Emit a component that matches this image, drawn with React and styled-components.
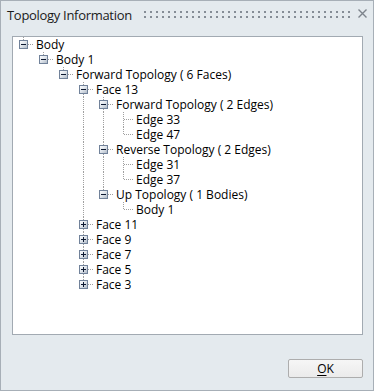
import React from 'react'
import styled, {createGlobalStyle} from 'styled-components'

const GlobalStyle = createGlobalStyle`
  html, body {
    margin: 0;
    padding: 0;
    background: #e4eaee;
  }
`

const FONT = `'Open Sans', 'Liberation Sans', Arial, sans-serif`
const LINE = '#a0a0a0'

const Window = styled.div`
  width: 374px;
  height: 391px;
  box-sizing: border-box;
  border: 1px solid #a7afb7;
  background: #e4eaee;
  display: flex;
  flex-direction: column;
  font-family: ${FONT};
  color: #000;
`

const TitleBar = styled.div`
  display: flex;
  align-items: flex-start;
  height: 35px;
  box-sizing: border-box;
  padding: 5px 6px 0 6px;
`

const Title = styled.div`
  font-size: 13px;
  letter-spacing: -0.3px;
  line-height: 18px;
  color: #1b1b1b;
  white-space: nowrap;
`

const Grip = styled.svg`
  flex: 1;
  height: 7px;
  margin: 5px 0 0 12px;
`

const CloseButton = styled.svg`
  width: 9px;
  height: 9px;
  margin: 3px 0 0 6px;
  flex: none;
`

const TreePanel = styled.div`
  margin: 0 10px 0 11px;
  height: 299px;
  box-sizing: border-box;
  border: 1px solid #a2aab2;
  background: #fff;
  overflow: hidden;
`

const Row = styled.div`
  display: flex;
  align-items: center;
  height: 15px;
  white-space: nowrap;
`

const Cell = styled.svg`
  width: 20px;
  height: 15px;
  flex: none;
  display: block;
  shape-rendering: crispEdges;
`

const Label = styled.span`
  font-size: 12px;
  line-height: 15px;
  padding-left: 3px;
`

const Footer = styled.div`
  display: flex;
  justify-content: flex-end;
  padding: 24px 10px 0 0;
`

const Button = styled.button`
  width: 75px;
  height: 19px;
  box-sizing: border-box;
  border: 1px solid #adadad;
  border-radius: 2px;
  background: linear-gradient(#f6f6f6, #ebebeb);
  font-family: ${FONT};
  font-size: 12px;
  line-height: 15px;
  padding: 0;
  color: #000;

  u {
    text-decoration: underline;
    text-underline-offset: 2px;
  }
`

const rows = [
  [0, 'Body', 'minus'],
  [1, 'Body 1', 'minus'],
  [2, 'Forward Topology ( 6 Faces)', 'minus'],
  [3, 'Face 13', 'minus'],
  [4, 'Forward Topology ( 2 Edges)', 'minus'],
  [5, 'Edge 33'],
  [5, 'Edge 47'],
  [4, 'Reverse Topology ( 2 Edges)', 'minus'],
  [5, 'Edge 31'],
  [5, 'Edge 37'],
  [4, 'Up Topology ( 1 Bodies)', 'minus'],
  [5, 'Body 1'],
  [3, 'Face 11', 'plus'],
  [3, 'Face 9', 'plus'],
  [3, 'Face 7', 'plus'],
  [3, 'Face 5', 'plus'],
  [3, 'Face 3', 'plus']
]

const hasNext = i => {
  const level = rows[i][0]
  for (let j = i + 1; j < rows.length; j++) {
    if (rows[j][0] < level) return false
    if (rows[j][0] === level) return true
  }
  return false
}

const ancestorHasNext = (i, k) => {
  for (let j = i - 1; j >= 0; j--) {
    if (rows[j][0] === k) return hasNext(j)
  }
  return false
}

const Dotted = ({x1, y1, x2, y2}) => (
  <line x1={x1} y1={y1} x2={x2} y2={y2} stroke={LINE} strokeWidth='1' strokeDasharray='1 1' />
)

const Expander = ({kind}) => (
  <g>
    <defs>
      <linearGradient id='exp' x1='0' y1='0' x2='1' y2='1'>
        <stop offset='0' stopColor='#ffffff' />
        <stop offset='0.45' stopColor='#e3e8ee' />
        <stop offset='1' stopColor='#aab5c2' />
      </linearGradient>
    </defs>
    <rect x='6.5' y='3.5' width='8' height='8' rx='1' fill='url(#exp)' stroke='#71829a' />
    <rect x='8' y='7' width='5' height='1' fill='#0c1830' />
    {kind === 'plus' && <rect x='10' y='5' width='1' height='5' fill='#0c1830' />}
  </g>
)

const Node = ({kind, last}) => (
  <Cell viewBox='0 0 20 15'>
    <Dotted x1='10.5' y1='0' x2='10.5' y2='8' />
    {!last && <Dotted x1='10.5' y1='8' x2='10.5' y2='15' />}
    <Dotted x1='11' y1='7.5' x2='20' y2='7.5' />
    {kind && <Expander kind={kind} />}
  </Cell>
)

const Guide = ({on}) => (
  <Cell viewBox='0 0 20 15'>
    {on && <Dotted x1='10.5' y1='0' x2='10.5' y2='15' />}
  </Cell>
)

const TreeRow = ({index}) => {
  const [level, label, kind] = rows[index]
  const guides = []
  for (let k = 0; k < level; k++) {
    guides.push(<Guide key={k} on={ancestorHasNext(index, k)} />)
  }
  return (
    <Row>
      {guides}
      <Node kind={kind} last={!hasNext(index)} />
      <Label>{label}</Label>
    </Row>
  )
}

const GripDots = () => (
  <Grip>
    <defs>
      <pattern id='grip' width='6' height='5' patternUnits='userSpaceOnUse'>
        <rect x='0' y='0' width='2' height='2' fill='#858d96' />
      </pattern>
    </defs>
    <rect x='0' y='0' width='100%' height='7' fill='url(#grip)' />
  </Grip>
)

const App = () => (
  <>
    <GlobalStyle />
    <Window>
      <TitleBar>
        <Title>Topology Information</Title>
        <GripDots />
        <CloseButton viewBox='0 0 9 9'>
          <path d='M0.5 0.5 L8.5 8.5 M8.5 0.5 L0.5 8.5' stroke='#7d848c' strokeWidth='1.4' />
        </CloseButton>
      </TitleBar>
      <TreePanel>
        {rows.map((r, i) => <TreeRow key={i} index={i} />)}
      </TreePanel>
      <Footer>
        <Button><u>O</u>K</Button>
      </Footer>
    </Window>
  </>
)

export default App
